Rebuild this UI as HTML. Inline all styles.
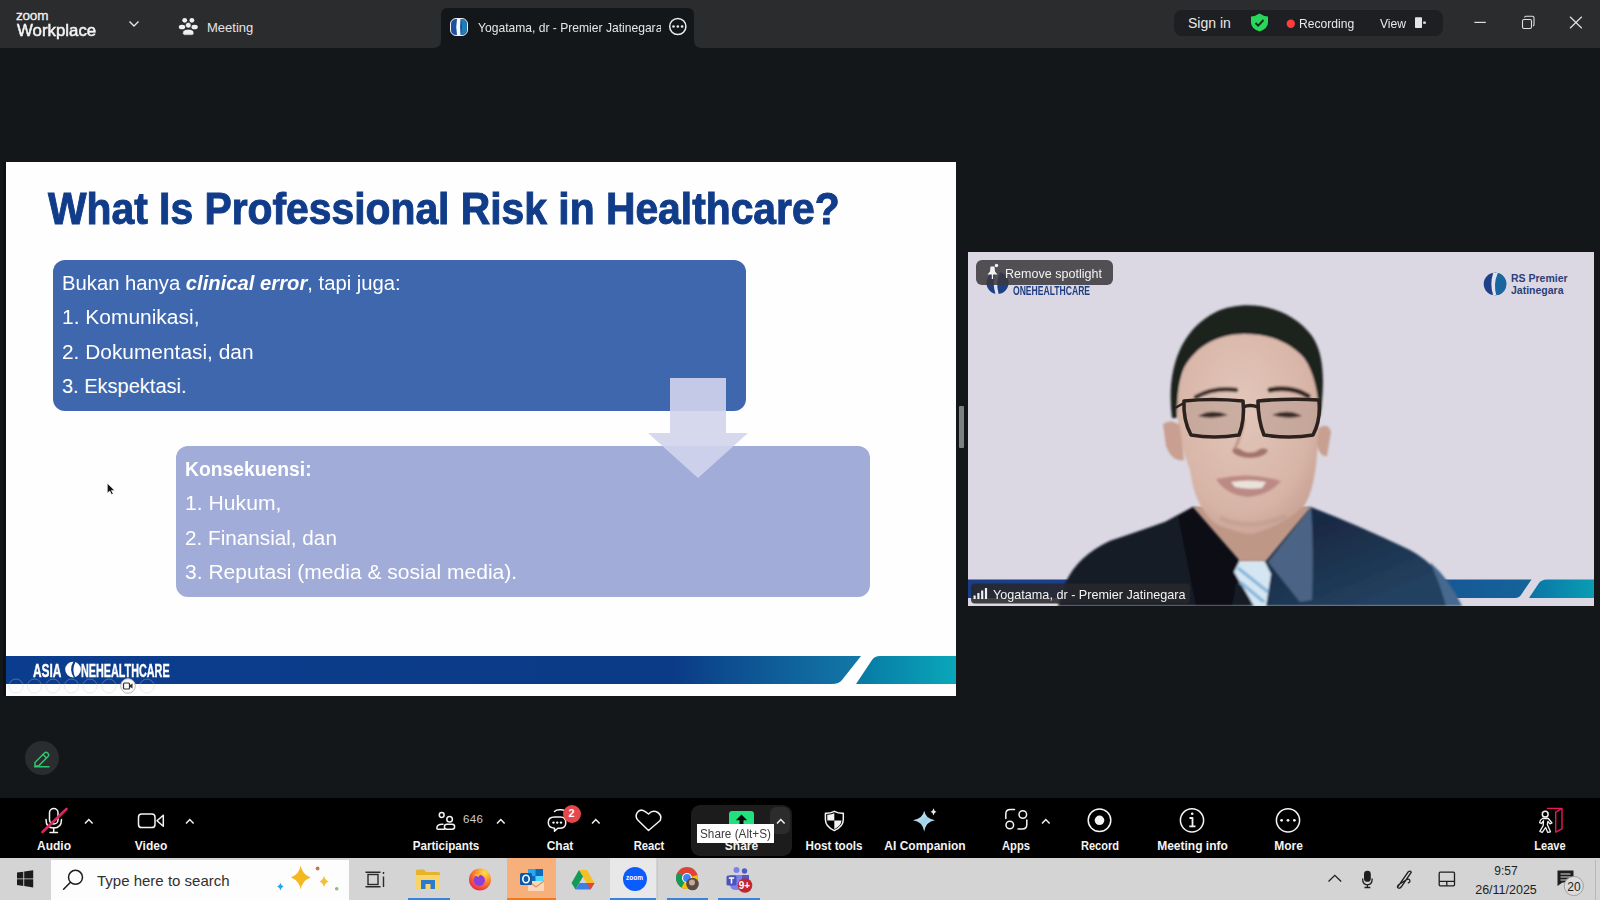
<!DOCTYPE html>
<html><head><meta charset="utf-8">
<style>
*{margin:0;padding:0;box-sizing:border-box}
html,body{width:1600px;height:900px;overflow:hidden;background:#14171a;font-family:"Liberation Sans",sans-serif;color:#fff}
.a{position:absolute}
.t{position:absolute;white-space:nowrap;line-height:1}
</style></head><body>
<!-- HEADER -->
<div class="a" id="hdr" style="left:0;top:0;width:1600px;height:48px;background:#2b2c2e">
  <div class="t" style="left:16px;top:9px;font-size:13.5px;color:#f2f2f2;letter-spacing:-0.2px;-webkit-text-stroke:0.3px #f2f2f2">zoom</div>
  <div class="t" style="left:17px;top:22px;font-size:16.5px;color:#f5f5f5;-webkit-text-stroke:0.5px #f5f5f5;transform:scaleX(1.02);transform-origin:0 0">Workplace</div>
  <svg class="a" style="left:128px;top:19px" width="12" height="10"><path d="M1.5 2.5L6 7L10.5 2.5" stroke="#e6e6e6" stroke-width="1.4" fill="none"/></svg>
  <svg class="a" style="left:178px;top:16px" width="22" height="20">
    <circle cx="6.7" cy="4.3" r="2.4" fill="#f0f0f0"/><circle cx="13.9" cy="4.3" r="2.4" fill="#f0f0f0"/>
    <ellipse cx="4" cy="11" rx="3.2" ry="2.3" fill="#f0f0f0"/><ellipse cx="16.6" cy="11" rx="3.2" ry="2.3" fill="#f0f0f0"/>
    <circle cx="10.3" cy="9.2" r="2.9" fill="#f0f0f0" stroke="#28292c" stroke-width="0.8"/>
    <path d="M4.6 17.2Q4.6 13.2 10.3 13.2Q16 13.2 16 17.2Q16 19.2 14 19.2H6.6Q4.6 19.2 4.6 17.2Z" fill="#f0f0f0" stroke="#28292c" stroke-width="0.8"/>
  </svg>
  <div class="t" style="left:207px;top:21px;font-size:13px;color:#e4e4e4">Meeting</div>
  <!-- tab -->
  <svg class="a" style="left:433px;top:8px" width="270" height="40"><path d="M0 40Q8 40 8 32V7Q8 0 15 0H254Q261 0 261 7V32Q261 40 269 40Z" fill="#14171a"/></svg>
  <svg class="a" style="left:450px;top:18px" width="18" height="18"><rect x="0.5" y="0.5" width="17" height="17" rx="5.5" fill="#1d4f9c" stroke="#e8eef8" stroke-width="1"/><path d="M7 1Q5.5 9 7 17H10.5Q9.6 9 10.5 1Z" fill="#f4f8ff"/><path d="M11 1H12Q17 2 17 9Q17 16 12 17H11Q13 9 11 1Z" fill="#1f7eb4"/></svg>
  <div style="position:absolute;left:478px;top:19px;width:183px;height:20px;overflow:hidden;white-space:nowrap;font-size:13px;line-height:18px;color:#e6e6e6"><span style="display:inline-block;transform:scaleX(0.93);transform-origin:0 0">Yogatama, dr - Premier Jatinegara</span></div>
  <svg class="a" style="left:668px;top:17px" width="20" height="20"><circle cx="9.8" cy="9.5" r="8.1" stroke="#ececec" stroke-width="1.5" fill="none"/><circle cx="5.5" cy="9.5" r="1.3" fill="#ececec"/><circle cx="9.8" cy="9.5" r="1.3" fill="#ececec"/><circle cx="14.1" cy="9.5" r="1.3" fill="#ececec"/></svg>
  <!-- right pill -->
  <div class="a" style="left:1174px;top:10px;width:269px;height:26px;background:#1e1f22;border-radius:8px"></div>
  <div class="t" style="left:1188px;top:16px;font-size:14px;color:#e8e8e8">Sign in</div>
  <svg class="a" style="left:1250px;top:13px" width="20" height="20"><path d="M9.5 0.5Q13 3 18 3.5V9.5Q18 15.5 9.5 18.5Q1 15.5 1 9.5V3.5Q6 3 9.5 0.5Z" fill="#27d85a"/><path d="M5.5 10L8.2 12.6L13.5 7" stroke="#0a3015" stroke-width="1.9" fill="none"/></svg>
  <svg class="a" style="left:1286px;top:19px" width="10" height="10"><circle cx="4.8" cy="4.8" r="4.2" fill="#ff3d3d"/></svg>
  <div class="t" style="left:1299px;top:16.5px;font-size:13px;color:#e8e8e8;transform:scaleX(0.93);transform-origin:0 0">Recording</div>
  <div class="t" style="left:1380px;top:17px;font-size:13px;color:#e8e8e8;transform:scaleX(0.93);transform-origin:0 0">View</div>
  <svg class="a" style="left:1414px;top:16px" width="14" height="14"><rect x="1" y="1.3" width="7" height="10.7" rx="0.8" fill="#e4e4e4"/><rect x="9.2" y="5.5" width="2.6" height="2.3" fill="#e4e4e4"/></svg>
  <!-- window controls -->
  <svg class="a" style="left:1470px;top:12px" width="120" height="22">
    <path d="M4.4 10.4H15.8" stroke="#e0e0e0" stroke-width="1.2"/>
    <rect x="52.5" y="7.5" width="9" height="9" rx="1.5" stroke="#e0e0e0" stroke-width="1.1" fill="none"/>
    <path d="M54.5 5.5Q54.8 4.3 56 4.3H62.5Q64 4.3 64 5.8V12.5Q64 13.6 63 14" stroke="#e0e0e0" stroke-width="1.1" fill="none"/>
    <path d="M100 4.7L111.8 16.3M111.8 4.7L100 16.3" stroke="#e0e0e0" stroke-width="1.2"/>
  </svg>
</div>

<!-- SLIDE -->
<div class="a" id="slide" style="left:6px;top:162px;width:950px;height:534px;background:#fefefe;overflow:hidden">
  <div class="t" style="left:41.5px;top:24px;font-size:45px;font-weight:bold;color:#103c89;-webkit-text-stroke:1px #103c89;transform:scaleX(0.907);transform-origin:0 0">What Is Professional Risk in Healthcare?</div>
  <div class="a" style="left:47px;top:98px;width:693px;height:151px;background:#3f67ae;border-radius:12px"></div>
  <div class="a" style="left:170px;top:284px;width:694px;height:151px;background:#a1acd8;border-radius:12px"></div>
  <div class="t" style="left:56px;top:111px;font-size:20px;color:#fff;transform:scaleX(1.012);transform-origin:0 0">Bukan hanya <b><i>clinical error</i></b>, tapi juga:</div>
  <div class="t" style="left:56px;top:145px;font-size:20px;color:#fff;transform:scaleX(1.048);transform-origin:0 0">1. Komunikasi,</div>
  <div class="t" style="left:56px;top:180px;font-size:20px;color:#fff;transform:scaleX(1.044);transform-origin:0 0">2. Dokumentasi, dan</div>
  <div class="t" style="left:56px;top:214px;font-size:20px;color:#fff">3. Ekspektasi.</div>
  <div class="t" style="left:179px;top:297px;font-size:20px;font-weight:bold;color:#fff;transform:scaleX(0.965);transform-origin:0 0">Konsekuensi:</div>
  <div class="t" style="left:179px;top:331px;font-size:20px;color:#fff;transform:scaleX(1.058);transform-origin:0 0">1. Hukum,</div>
  <div class="t" style="left:179px;top:366px;font-size:20px;color:#fff;transform:scaleX(1.035);transform-origin:0 0">2. Finansial, dan</div>
  <div class="t" style="left:179px;top:400px;font-size:20px;color:#fff;transform:scaleX(1.052);transform-origin:0 0">3. Reputasi (media &amp; sosial media).</div>
  <svg class="a" style="left:0;top:0" width="950" height="534">
    <path d="M664 216H720V271H742L692 316L642 271H664Z" fill="rgba(209,212,236,0.9)"/>
    <defs>
      <linearGradient id="g1" x1="0" x2="1"><stop offset="0" stop-color="#0b3d8f"/><stop offset="0.78" stop-color="#0b3b86"/><stop offset="1" stop-color="#1279a8"/></linearGradient>
      <linearGradient id="g2" x1="0" x2="1"><stop offset="0" stop-color="#0878a4"/><stop offset="1" stop-color="#0aa7b9"/></linearGradient>
    </defs>
    <path d="M0 494H855L836 518Q833 522 826 522H0Z" fill="url(#g1)"/>
    <path d="M874 494H950V522H850L866 498Q868.5 494 874 494Z" fill="url(#g2)"/>
  </svg>
  <div class="t" style="left:27px;top:500px;font-size:18px;font-weight:bold;color:#fff;-webkit-text-stroke:0.4px #fff;transform:scaleX(0.66);transform-origin:0 0">ASIA</div>
  <svg class="a" style="left:59px;top:499px" width="17" height="18"><circle cx="8" cy="8.6" r="7.8" fill="#fff"/><path d="M8.5 0.5Q3.5 8.6 9 16.7L10.2 16.5Q6.5 8.6 10.5 0.7Z" fill="#0b3c8e"/></svg>
  <div class="t" style="left:75px;top:500px;font-size:18px;font-weight:bold;color:#fff;-webkit-text-stroke:0.4px #fff;transform:scaleX(0.6);transform-origin:0 0">NEHEALTHCARE</div>
</div>

<!-- VIDEO -->
<div class="a" id="video" style="left:968px;top:252px;width:626px;height:354px;background:#dbd8e3;overflow:hidden">
<svg class="a" style="left:0;top:0" width="626" height="354" viewBox="968 252 626 354">
  <defs>
    <linearGradient id="vs1" x1="0" x2="1"><stop offset="0" stop-color="#1b3c86"/><stop offset="0.7" stop-color="#1a4c90"/><stop offset="1" stop-color="#14649a"/></linearGradient>
    <linearGradient id="vs2" x1="0" x2="1"><stop offset="0" stop-color="#0a74a8"/><stop offset="1" stop-color="#0a9db2"/></linearGradient>
    <radialGradient id="skin" cx="0.45" cy="0.4" r="0.7"><stop offset="0" stop-color="#e3c7bb"/><stop offset="0.7" stop-color="#d7b4a6"/><stop offset="1" stop-color="#c49c8e"/></radialGradient>
    <linearGradient id="shirtR" x1="0" y1="0" x2="1" y2="0.6"><stop offset="0" stop-color="#15223a"/><stop offset="0.6" stop-color="#1a2c46"/><stop offset="1" stop-color="#22405f"/></linearGradient>
    <filter id="bl" x="-5%" y="-5%" width="110%" height="110%"><feGaussianBlur stdDeviation="0.9"/></filter>
    <filter id="bl2"><feGaussianBlur stdDeviation="1.6"/></filter>
  </defs>
  <!-- bottom stripes -->
  <path d="M968 579.5H1531.5L1521 595Q1519 598 1515 598H968Z" fill="url(#vs1)"/>
  <path d="M1547 579.5H1594V598H1529L1539 583Q1541.5 579.5 1547 579.5Z" fill="url(#vs2)"/>
  <!-- logos -->
  <g>
    <circle cx="1495" cy="284" r="11.3" fill="#1f3f86"/>
    <path d="M1495 272.7A11.3 11.3 0 0 1 1495 295.3Z" fill="#19679e"/>
    <path d="M1493.2 273Q1489.5 284 1493.2 295.2H1496.3Q1493 284 1497.8 273Z" fill="#dfe4ef"/>
    <circle cx="997.5" cy="283" r="11" fill="#1f3f86"/>
    <path d="M995.5 272.3Q991.8 283 995.5 294H998.6Q995.3 283 1000 272.3Z" fill="#dfe4ef"/>
  </g>
  <!-- body / shirt -->
  <g filter="url(#bl)">
  <path d="M1058 606L1066 582Q1078 556 1110 541Q1140 531 1165 522L1193 507L1250 520L1311 507Q1360 526 1410 550Q1440 566 1462 606Z" fill="url(#shirtR)"/>
  <path d="M1058 606L1066 582Q1078 556 1110 541Q1140 531 1165 522L1193 507L1250 540L1250 606Z" fill="#121b27"/>
  <path d="M1178 516L1193 507L1240 562L1232 606H1196Z" fill="#0b1117"/>
  <!-- right collar -->
  <path d="M1268 562L1311 507Q1314 550 1312 600L1300 602Z" fill="#4b6484"/>
  <path d="M1430 562Q1450 580 1462 606H1446Q1440 584 1430 562Z" fill="#46688f"/>
  <!-- tie -->
  <path d="M1234 572L1240 560H1264L1271 574L1266 606H1254Z" fill="#d5e6f3"/>
  <path d="M1238 568L1268 592M1240 582L1264 602" stroke="#86b6da" stroke-width="3.5"/>
  </g>
  <!-- neck / face -->
  <g filter="url(#bl)">
  <path d="M1193 507L1240 561H1266L1311 507Z" fill="#bf9787"/>
  <path d="M1190 470Q1194 506 1216 524Q1240 534 1252 534Q1282 526 1304 506Q1316 488 1318 440L1320 402C1320 360 1296 326 1246 324C1200 326 1178 360 1177 410Q1178 440 1190 470Z" fill="url(#skin)"/>
  <path d="M1163 424Q1172 418 1180 426L1184 460Q1172 462 1166 446Z" fill="#c89f90"/>
  <path d="M1319 428Q1328 422 1331 432L1327 456Q1320 458 1317 444Z" fill="#c89f90"/>
  <!-- hair -->
  <path d="M1172 418C1166 370 1180 330 1216 312C1246 298 1290 306 1312 336C1326 356 1324 390 1320 418C1318 392 1314 372 1304 358C1288 340 1266 334 1244 334C1218 334 1196 346 1184 368C1178 382 1177 400 1177 418Z" fill="#1a201f"/>
  <!-- eyebrows -->
  <path d="M1196 397Q1214 387 1236 390" stroke="#3d302b" stroke-width="4.5" fill="none" stroke-linecap="round"/>
  <path d="M1270 390Q1292 386 1308 396" stroke="#342823" stroke-width="5" fill="none" stroke-linecap="round"/>
  <!-- lens tint -->
  <path d="M1185 402Q1210 399 1242 402Q1244 420 1238 434Q1214 438 1192 434Q1184 420 1185 402Z" fill="#b89a90" opacity="0.55"/>
  <path d="M1258 402Q1290 399 1318 401Q1320 420 1312 434Q1290 438 1264 434Q1258 420 1258 402Z" fill="#b89a90" opacity="0.55"/>
  <!-- eyes -->
  <path d="M1198 416Q1212 408 1228 415Q1212 420 1198 416Z" fill="#3b2c28"/>
  <path d="M1272 415Q1288 408 1302 416Q1288 420 1272 415Z" fill="#3b2c28"/>
  <!-- nose & mouth -->
  <path d="M1244 420Q1240 440 1234 450" stroke="#c09485" stroke-width="3" fill="none"/>
  <path d="M1232 450Q1238 446 1243 451Q1250 454 1257 451Q1262 446 1268 450Q1266 457 1250 458Q1234 457 1232 450Z" fill="#a4746a"/>
  <path d="M1216 479Q1248 471 1281 481Q1270 495 1248 497Q1226 495 1216 479Z" fill="#bc8a84"/>
  <path d="M1231 482Q1248 479 1266 482L1262 488Q1248 490 1235 487Z" fill="#ece2dc"/>
  <path d="M1220 518Q1250 532 1286 516" stroke="#b8968a" stroke-width="5" fill="none" opacity="0.45"/>
  </g>
  <!-- glasses -->
  <g fill="none" stroke="#2b221f" stroke-width="3.6" stroke-linejoin="round">
    <path d="M1184 401Q1212 398 1243 401Q1245 420 1239 435Q1214 439 1191 435Q1183 420 1184 401Z"/>
    <path d="M1258 401Q1290 398 1319 400Q1321 420 1313 435Q1290 439 1264 435Q1258 420 1258 401Z"/>
    <path d="M1243 407Q1250 404 1258 407"/>
    <path d="M1184 403L1175 408" stroke-width="2.5"/>
  </g>
  <!-- remove spotlight pill -->
  <rect x="976" y="260" width="137" height="25" rx="6" fill="rgba(58,56,60,0.86)"/>
  <g fill="#f2f2f2">
    <path d="M990.5 266.5H994.5L995 271.5L997.5 274.5H987.5L990 271.5Z"/>
    <rect x="991.8" y="274" width="1.3" height="5"/>
    <circle cx="996.5" cy="265.5" r="1.7"/>
  </g>
  <!-- name label -->
  <rect x="971" y="583.5" width="219" height="20" rx="4" fill="rgba(40,40,44,0.88)"/>
  <g fill="#f0f0f0"><rect x="973.5" y="595.5" width="2.2" height="3.5"/><rect x="977.3" y="593" width="2.2" height="6"/><rect x="981.1" y="590.5" width="2.2" height="8.5"/><rect x="984.9" y="588" width="2.2" height="11"/></g>
</svg>
  <div class="t" style="left:37px;top:14.5px;font-size:13px;color:#f2f2f2;transform:scaleX(0.965);transform-origin:0 0">Remove spotlight</div>
  <div class="t" style="left:45px;top:33px;font-size:11px;font-weight:bold;color:#1e3e80;transform:scaleX(0.78) scaleY(1.1);transform-origin:0 0">ONEHEALTHCARE</div>
  <div class="t" style="left:543px;top:20.5px;font-size:10.5px;font-weight:bold;color:#2c3f78">RS Premier</div>
  <div class="t" style="left:543px;top:33px;font-size:10.5px;font-weight:bold;color:#2c3f78">Jatinegara</div>
  <div class="t" style="left:25px;top:335.5px;font-size:13.5px;color:#f4f4f4;transform:scaleX(0.935);transform-origin:0 0">Yogatama, dr - Premier Jatinegara</div>
</div>

<!-- divider handle -->
<div class="a" style="left:959px;top:406px;width:5px;height:42px;background:#7e8182;border-radius:1px"></div>
<div class="a" style="left:3px;top:162px;width:3px;height:534px;background:#0e1013"></div>
<!-- pencil button -->
<div class="a" style="left:25px;top:741px;width:34px;height:34px;border-radius:50%;background:#2a2c30"></div>
<svg class="a" style="left:25px;top:741px" width="34" height="34" fill="none" stroke="#2fc56f" stroke-width="1.5" stroke-linejoin="round" stroke-linecap="round">
  <path d="M10 21.5L19.5 12Q21 10.5 22.5 12L23 12.5Q24.5 14 23 15.5L13.5 25H10Z"/>
  <path d="M18 13.5L21.5 17"/>
  <path d="M9.5 25.7H24"/>
</svg>
<!-- mouse cursor -->
<svg class="a" style="left:106px;top:482px" width="12" height="14"><path d="M1.3 1.3V11.2L3.7 9L5.6 12.6L7.2 11.8L5.4 8.4H8.7Z" fill="#111" stroke="#fff" stroke-width="0.6"/></svg>
<!-- annotation toolbar -->
<svg class="a" style="left:0;top:676px" width="170" height="20" fill="none" stroke="rgba(200,200,205,0.35)" stroke-width="1">
  <circle cx="16" cy="10" r="7"/><circle cx="34.5" cy="10" r="7"/><circle cx="53" cy="10" r="7"/><circle cx="71.5" cy="10" r="7"/><circle cx="90" cy="10" r="7"/><circle cx="109" cy="10" r="7"/><circle cx="147" cy="10" r="7"/>
  <circle cx="128" cy="10" r="7.3" fill="#fafafa" stroke="#bbb"/>
  <rect x="123.5" y="7" width="6" height="6" rx="1" stroke="#333" stroke-width="1.2"/><path d="M130 9L132.5 7.5V12.5L130 11Z" fill="#333" stroke="none"/>
</svg>
<!-- TOOLBAR -->
<div class="a" id="tb" style="left:0;top:798px;width:1600px;height:60px;background:#000">
</div>
<!-- toolbar icons -->
<svg class="a" style="left:0;top:798px" width="1600" height="60" fill="none" stroke="#f4f4f4" stroke-width="1.5" stroke-linecap="round" stroke-linejoin="round">
  <!-- audio mic -->
  <rect x="49.5" y="10.5" width="8.5" height="15.5" rx="4.25"/>
  <path d="M46 21.5Q46 30 53.7 30Q61.5 30 61.5 21.5"/>
  <path d="M53.7 30V34.5M50 34.5H57.5"/>
  <path d="M42.5 34L66.5 11" stroke="#e0245e" stroke-width="2.6"/>
  <!-- video -->
  <rect x="138.5" y="16" width="16.5" height="13.6" rx="3.2"/>
  <path d="M157 22.8L163.3 17.3V28.3Z"/>
  <!-- participants -->
  <circle cx="441.7" cy="17" r="2.4"/>
  <circle cx="449.6" cy="21.3" r="2.8"/>
  <path d="M443 26.3Q436.8 26 436.8 30.3Q436.8 31.3 438 31.3H444.5"/>
  <rect x="444.4" y="26.3" width="10.2" height="5" rx="2.5"/>
  <!-- chat -->
  <path d="M554.5 13.5Q556 11.8 559.5 11.8H561Q565.5 11.8 566.8 15"/>
  <path d="M554.5 19H560.5Q565.8 19 565.8 24.6Q565.8 30.2 560.5 30.2H557.8L554.5 33.3V30.2Q548.3 30 548.3 24.6Q548.3 19 554.5 19Z"/>
  <!-- react heart -->
  <path d="M648.5 32.5L638 22.3Q634.8 18.7 637.2 14.6Q640.3 10.2 645.2 13.6L648.5 16Q652.7 11.6 657.8 14.5Q662.2 17.4 660.2 22.5Z"/>
  <!-- host tools shield -->
  <path d="M834.3 13.3Q839 15.6 843.3 15.3V21.6Q843.3 28.8 834.3 32.6Q825.4 28.8 825.4 21.6V15.3Q829.7 15.6 834.3 13.3Z"/>
  <path d="M834.3 16V22.6H827.3V21.3V16.6Q831 16.9 834.3 15.2Z" fill="#f4f4f4" stroke="none"/>
  <path d="M834.3 22.6H841.5Q841.3 28 834.3 31.2Z" fill="#f4f4f4" stroke="none"/>
  <!-- apps -->
  <path d="M1005.8 20.5V16Q1005.8 11.5 1010.3 11.5H1014.5"/>
  <path d="M1026.8 22V26.5Q1026.8 31 1022.3 31H1018"/>
  <circle cx="1022.8" cy="16.5" r="3.8"/>
  <circle cx="1009.8" cy="27" r="3.8"/>
  <!-- record -->
  <circle cx="1099.5" cy="22.3" r="11.3"/>
  <circle cx="1099.5" cy="22.3" r="4.8" fill="#f4f4f4" stroke="none"/>
  <!-- meeting info -->
  <circle cx="1192" cy="22.3" r="11.6"/>
  <circle cx="1192.2" cy="15.8" r="1.3" fill="#f4f4f4" stroke="none"/>
  <path d="M1189.5 20H1192.5V28.3M1189.3 28.3H1195.5" stroke-width="1.8" stroke-linecap="butt"/>
  <!-- more -->
  <circle cx="1288" cy="22.3" r="11.6"/>
  <circle cx="1281.6" cy="22.3" r="1.4" fill="#f4f4f4" stroke="none"/>
  <circle cx="1288" cy="22.3" r="1.4" fill="#f4f4f4" stroke="none"/>
  <circle cx="1294.4" cy="22.3" r="1.4" fill="#f4f4f4" stroke="none"/>
  <!-- leave -->
  <path d="M1547.5 10.4H1562V30.8L1555.7 34.2V14.2L1562 10.4" stroke="#e8185a" stroke-width="1.4"/>
  <circle cx="1545.2" cy="16.2" r="2.9"/>
  <path d="M1542.5 20.5Q1540 21.5 1539.6 24.6L1541.4 25.5L1543.5 22.8L1543.2 27.6L1539.8 33.3L1542.3 34.3L1545.6 29.5L1547.8 34.4L1550.5 33.8L1547.3 26.5L1547.9 23.4L1549.9 25.9L1552 25L1548.3 20.5Z" stroke-width="1.3"/>
</svg>
<div class="a" style="left:562.5px;top:804.5px;width:18px;height:18px;border-radius:50%;background:#e6474a"></div>
<div class="t" style="left:571.5px;top:808px;font-size:11px;font-weight:bold;color:#fff;transform:translateX(-50%)">2</div>
<svg class="a" style="left:0;top:798px" width="1600" height="60">
  <circle cx="553.5" cy="24.6" r="1.2" fill="#f4f4f4"/><circle cx="557.2" cy="24.6" r="1.2" fill="#f4f4f4"/><circle cx="561" cy="24.6" r="1.2" fill="#f4f4f4"/>
  <!-- AI companion star -->
  <defs><linearGradient id="ai" x1="0" y1="0" x2="1" y2="1"><stop offset="0" stop-color="#e4f3fb"/><stop offset="0.5" stop-color="#9fd0e6"/><stop offset="1" stop-color="#d8eef8"/></linearGradient></defs>
  <path d="M924.2 12.8Q925.6 20.8 935 22.3Q925.6 23.8 924.2 33.5Q922.8 23.8 913 22.3Q922.8 20.8 924.2 12.8Z" fill="url(#ai)"/>
  <path d="M933.5 10.3Q934 13.2 936.5 13.8Q934 14.4 933.5 17.5Q933 14.4 930.5 13.8Q933 13.2 933.5 10.3Z" fill="#dff1fa"/>
</svg>
<div class="t" style="left:463px;top:814px;font-size:11.5px;letter-spacing:0.4px;color:#cfcfcf">646</div>
<svg class="a" style="left:496px;top:818px" width="10" height="7"><path d="M1 5.5L4.8 1.6L8.6 5.5" stroke="#f4f4f4" stroke-width="1.5" fill="none"/></svg><svg class="a" style="left:84px;top:818px" width="10" height="7"><path d="M1 5.5L4.8 1.6L8.6 5.5" stroke="#f4f4f4" stroke-width="1.5" fill="none"/></svg><svg class="a" style="left:185px;top:818px" width="10" height="7"><path d="M1 5.5L4.8 1.6L8.6 5.5" stroke="#f4f4f4" stroke-width="1.5" fill="none"/></svg><svg class="a" style="left:591px;top:818px" width="10" height="7"><path d="M1 5.5L4.8 1.6L8.6 5.5" stroke="#f4f4f4" stroke-width="1.5" fill="none"/></svg><svg class="a" style="left:1041px;top:818px" width="10" height="7"><path d="M1 5.5L4.8 1.6L8.6 5.5" stroke="#f4f4f4" stroke-width="1.5" fill="none"/></svg>
<!-- share -->
<div class="a" style="left:691px;top:805px;width:101px;height:51px;background:#1c1c1c;border-radius:9px"></div>
<div class="a" style="left:770px;top:807px;width:20px;height:27px;background:#2c2c2c;border-radius:6px"></div>
<svg class="a" style="left:776px;top:818px" width="10" height="7"><path d="M1 5.5L4.8 1.6L8.6 5.5" stroke="#f4f4f4" stroke-width="1.5" fill="none"/></svg>
<div class="a" style="left:729px;top:811px;width:25px;height:20px;background:#22e07e;border-radius:3px"></div>
<svg class="a" style="left:729px;top:811px" width="25" height="20"><path d="M12.5 3.5L6.8 9.3H10.5V16H14.5V9.3H18.2Z" fill="#0a0a0a"/></svg>
<div class="t" style="left:54px;top:840px;font-size:12px;font-weight:bold;color:#f4f4f4;transform:translateX(-50%) scaleX(1.0)">Audio</div><div class="t" style="left:151px;top:840px;font-size:12px;font-weight:bold;color:#f4f4f4;transform:translateX(-50%) scaleX(1.0)">Video</div><div class="t" style="left:445.5px;top:840px;font-size:12px;font-weight:bold;color:#f4f4f4;transform:translateX(-50%) scaleX(0.97)">Participants</div><div class="t" style="left:560px;top:840px;font-size:12px;font-weight:bold;color:#f4f4f4;transform:translateX(-50%) scaleX(1.0)">Chat</div><div class="t" style="left:648.5px;top:840px;font-size:12px;font-weight:bold;color:#f4f4f4;transform:translateX(-50%) scaleX(0.94)">React</div>
<div class="t" style="left:741.5px;top:840px;font-size:12px;font-weight:bold;color:#f4f4f4;transform:translateX(-50%) scaleX(1.0)">Share</div>
<div class="t" style="left:834px;top:840px;font-size:12px;font-weight:bold;color:#f4f4f4;transform:translateX(-50%) scaleX(0.97)">Host tools</div><div class="t" style="left:925px;top:840px;font-size:12px;font-weight:bold;color:#f4f4f4;transform:translateX(-50%) scaleX(1.0)">AI Companion</div><div class="t" style="left:1016px;top:840px;font-size:12px;font-weight:bold;color:#f4f4f4;transform:translateX(-50%) scaleX(0.93)">Apps</div><div class="t" style="left:1099.5px;top:840px;font-size:12px;font-weight:bold;color:#f4f4f4;transform:translateX(-50%) scaleX(0.92)">Record</div><div class="t" style="left:1192.5px;top:840px;font-size:12px;font-weight:bold;color:#f4f4f4;transform:translateX(-50%) scaleX(1.0)">Meeting info</div><div class="t" style="left:1288.5px;top:840px;font-size:12px;font-weight:bold;color:#f4f4f4;transform:translateX(-50%) scaleX(1.0)">More</div><div class="t" style="left:1550.3px;top:840px;font-size:12px;font-weight:bold;color:#f4f4f4;transform:translateX(-50%) scaleX(0.92)">Leave</div>
<div class="a" style="left:697px;top:824px;width:77px;height:19px;background:#fff"></div>
<div class="t" style="left:699.5px;top:827.5px;font-size:12px;color:#3c3c3c;transform:scaleX(0.98);transform-origin:0 0">Share (Alt+S)</div>

<!-- TASKBAR -->
<div class="a" id="task" style="left:0;top:858px;width:1600px;height:42px;background:#d4d4d4">
  <svg class="a" style="left:16px;top:12px" width="20" height="18"><path d="M1 2.6L7.3 1.7V8.4H1Z M8.2 1.6L17.2 0.3V8.4H8.2Z M1 9.3H7.3V16L1 15.1Z M8.2 9.3H17.2V17.4L8.2 16.1Z" fill="#1b1b1b"/></svg>
  <div class="a" style="left:51px;top:1.5px;width:298px;height:40.5px;background:#fdfdfd"></div>
  <svg class="a" style="left:60px;top:10px" width="24" height="24"><circle cx="15.5" cy="9.3" r="7" stroke="#1e1e1e" stroke-width="1.5" fill="none"/><path d="M10.5 14.3L3.6 21.2" stroke="#1e1e1e" stroke-width="1.6" stroke-linecap="round"/></svg>
  <div class="t" style="left:97px;top:15px;font-size:15px;color:#303030">Type here to search</div>
  <svg class="a" style="left:270px;top:860px;top:2px" width="80" height="40">
    <path d="M30.7 5.5Q32 14 40.5 17.5Q32 21 30.7 29.5Q29.4 21 21 17.5Q29.4 14 30.7 5.5Z" fill="#f3b91f"/>
    <path d="M54 15.5Q54.6 19.7 58.6 21.5Q54.6 23.3 54 27.5Q53.4 23.3 49.4 21.5Q53.4 19.7 54 15.5Z" fill="#f3c03a"/>
    <path d="M10.4 22.7Q10.8 25.5 13.6 26.6Q10.8 27.7 10.4 30.5Q10 27.7 7.2 26.6Q10 25.5 10.4 22.7Z" fill="#2aa3e6"/>
    <circle cx="47.6" cy="8.5" r="1.9" fill="#c07a50"/>
    <circle cx="66.7" cy="28.8" r="1.8" fill="#8fbf6e"/>
  </svg>
  <svg class="a" style="left:364px;top:13px" width="22" height="18" fill="none" stroke="#2b2b2b" stroke-width="1.4">
    <rect x="4" y="3.5" width="10" height="10"/><path d="M1.5 1.2H16.5M1.5 15.8H16.5M19.5 1V3M19.5 5.5V16"/>
  </svg>
  <!-- file explorer -->
  <svg class="a" style="left:415px;top:10px" width="26" height="22">
    <path d="M1 3Q1 1.5 2.5 1.5H9L11 4H23.5Q25 4 25 5.5V20H1Z" fill="#e8b32c"/>
    <path d="M1 7H25V20Q25 21 24 21H2Q1 21 1 20Z" fill="#f9d468"/>
    <path d="M6 12H20V21H15.5V16H10.5V21H6Z" fill="#2a7ad0"/>
  </svg>
  <div class="a" style="left:408px;top:40px;width:42px;height:2px;background:#3a84d8"></div>
  <!-- firefox -->
  <svg class="a" style="left:468px;top:9px" width="24" height="24">
    <defs><radialGradient id="ff" cx="0.7" cy="0.2" r="0.9"><stop offset="0" stop-color="#ffe14a"/><stop offset="0.45" stop-color="#ff8a2a"/><stop offset="1" stop-color="#e3214f"/></radialGradient></defs>
    <circle cx="12" cy="12.5" r="11" fill="url(#ff)"/>
    <circle cx="11.3" cy="13.3" r="5.6" fill="#8d3ed8"/>
    <path d="M6 8Q9 5 14 7Q11 8 10.5 10Z" fill="#ffb23d"/>
  </svg>
  <!-- outlook -->
  <div class="a" style="left:507px;top:0;width:49px;height:42px;background:#f7b07c"></div>
  <div class="a" style="left:507px;top:40px;width:49px;height:2px;background:#f27a1a"></div>
  <svg class="a" style="left:519px;top:10px" width="26" height="24">
    <rect x="9" y="1" width="15" height="14" fill="#0f6cbd"/>
    <rect x="9" y="1" width="7.5" height="7" fill="#28a8ea"/><rect x="16.5" y="8" width="7.5" height="7" fill="#50d9ff"/>
    <path d="M9 13H25V23H9Z" fill="#fbd6b8"/>
    <path d="M9 13L17 19L25 13" stroke="#d09a6a" stroke-width="1.3" fill="none"/>
    <rect x="1" y="5" width="12" height="12" rx="1.5" fill="#0a5aa8"/>
    <ellipse cx="7" cy="11" rx="3.2" ry="3.8" stroke="#fff" stroke-width="1.6" fill="none"/>
  </svg>
  <!-- drive -->
  <svg class="a" style="left:571px;top:11px" width="24" height="21">
    <path d="M8 1H16L23.5 14H15.5Z" fill="#f6bf26"/>
    <path d="M8 1L0.5 14L4.5 20.5L12 7.5Z" fill="#139a56"/>
    <path d="M4.5 20.5H19.5L23.5 14H8.5Z" fill="#3a7ee6"/>
    <path d="M19.5 20.5L23.5 14H15.5Z" fill="#e94335"/>
  </svg>
  <!-- zoom -->
  <div class="a" style="left:610px;top:0;width:46px;height:42px;background:#e8e8e8"></div>
  <div class="a" style="left:610px;top:40px;width:46px;height:2px;background:#3a84d8"></div>
  <div class="a" style="left:622.5px;top:8.5px;width:24px;height:24px;border-radius:50%;background:#0b5cff"></div>
  <div class="t" style="left:634.5px;top:17px;font-size:6.5px;font-weight:bold;color:#fff;transform:translateX(-50%)">zoom</div>
  <div class="a" style="left:657px;top:2px;width:1px;height:40px;background:#c8c8c8"></div>
  <!-- chrome -->
  <svg class="a" style="left:675px;top:8px" width="26" height="26">
    <circle cx="12" cy="12" r="11" fill="#db4437"/>
    <path d="M12 12L2.5 6.5A11 11 0 0 0 6.5 21.5Z" fill="#0f9d58"/>
    <path d="M12 12L6.5 21.5A11 11 0 0 0 22.5 9Z" fill="#f4c20d"/>
    <circle cx="12" cy="12" r="5" fill="#fff"/><circle cx="12" cy="12" r="3.9" fill="#4285f4"/>
    <circle cx="17.5" cy="18" r="6.3" fill="#5a4a44"/><circle cx="17" cy="16.5" r="3" fill="#c9a79a"/>
  </svg>
  <div class="a" style="left:667px;top:40px;width:41px;height:2px;background:#3a84d8"></div>
  <!-- teams -->
  <svg class="a" style="left:725px;top:7px" width="30" height="30">
    <circle cx="11.5" cy="5" r="3" fill="#7b83eb"/><circle cx="19.5" cy="6" r="2.7" fill="#5059c9"/>
    <path d="M5 10H18V20Q18 25 11.5 25Q5 25 5 20Z" fill="#7b83eb"/>
    <path d="M17 10H24V17Q24 21 20 21Q17 21 17 17Z" fill="#5059c9"/>
    <rect x="1.5" y="10.5" width="10" height="10" rx="1.5" fill="#4b53bc"/>
    <path d="M3.8 13H9.2M6.5 13V18.5" stroke="#fff" stroke-width="1.5"/>
    <circle cx="20" cy="20.5" r="7.3" fill="#c4262e"/>
  </svg>
  <div class="t" style="left:744.5px;top:23px;font-size:10px;font-weight:bold;color:#fff;transform:translateX(-50%)">9+</div>
  <div class="a" style="left:718px;top:40px;width:42px;height:2px;background:#3a84d8"></div>
  <!-- tray -->
  <svg class="a" style="left:1320px;top:8px" width="280" height="34" fill="none" stroke="#1e1e1e" stroke-width="1.3">
    <path d="M8.5 15.5L14.8 9.3L21.2 15.5"/>
    <rect x="44" y="4.8" width="6.8" height="11" rx="3.4" fill="#1e1e1e" stroke="none"/>
    <path d="M42.6 12.5Q42.6 18.8 47.4 18.8Q52.2 18.8 52.2 12.5M47.4 18.8V21.3M44.5 21.5H50.3"/>
    <path d="M77.7 20.8L88.3 5.8Q90.3 4.2 91.3 6.2L81.5 20.5Q79.5 23 78 21.8Q76.5 20.5 79 18.5L86 14Q89 12.2 89.8 14.3Q90.6 16 87.8 17.2"/>
    <rect x="119.2" y="6.2" width="15.3" height="13.6" rx="1"/><path d="M119.2 15.3H134.5M126.8 15.3V19.8"/>
  </svg>
  <div class="t" style="left:1506px;top:6.5px;font-size:12px;color:#1e1e1e;transform:translateX(-50%)">9:57</div>
  <div class="t" style="left:1506px;top:25.5px;font-size:12.5px;color:#1e1e1e;transform:translateX(-50%)">26/11/2025</div>
  <svg class="a" style="left:1555px;top:11px" width="32" height="30">
    <path d="M2.5 1.5H18.5V13.5H7.5L2.5 17Z" fill="#1e1e1e"/>
    <path d="M5.5 5H15.5M5.5 8H15.5M5.5 11H12" stroke="#d9d9d9" stroke-width="1.1"/>
    <circle cx="18.8" cy="17" r="9.6" fill="#dcdcdc" stroke="#9a9a9a" stroke-width="0.9"/>
  </svg>
  <div class="t" style="left:1574px;top:23px;font-size:12px;color:#1e1e1e;transform:translateX(-50%)">20</div>
  <div class="a" style="left:1595px;top:2px;width:1px;height:40px;background:#b9b9b9"></div>
</div>
</body></html>
